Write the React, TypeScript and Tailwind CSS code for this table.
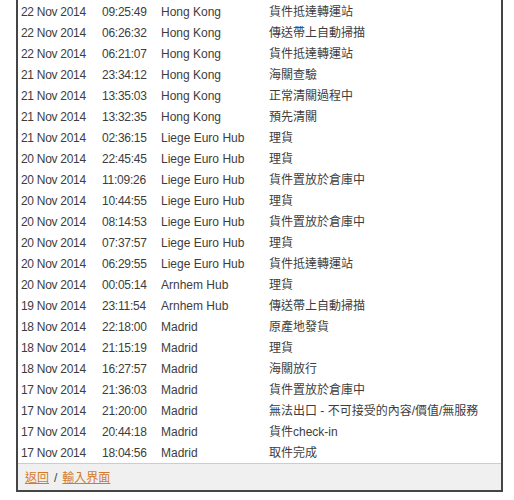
const rows: [string, string, string, string][] = [
  ["22 Nov 2014", "09:25:49", "Hong Kong", "貨件抵達轉運站"],
  ["22 Nov 2014", "06:26:32", "Hong Kong", "傳送帶上自動掃描"],
  ["22 Nov 2014", "06:21:07", "Hong Kong", "貨件抵達轉運站"],
  ["21 Nov 2014", "23:34:12", "Hong Kong", "海關查驗"],
  ["21 Nov 2014", "13:35:03", "Hong Kong", "正常清關過程中"],
  ["21 Nov 2014", "13:32:35", "Hong Kong", "預先清關"],
  ["21 Nov 2014", "02:36:15", "Liege Euro Hub", "理貨"],
  ["20 Nov 2014", "22:45:45", "Liege Euro Hub", "理貨"],
  ["20 Nov 2014", "11:09:26", "Liege Euro Hub", "貨件置放於倉庫中"],
  ["20 Nov 2014", "10:44:55", "Liege Euro Hub", "理貨"],
  ["20 Nov 2014", "08:14:53", "Liege Euro Hub", "貨件置放於倉庫中"],
  ["20 Nov 2014", "07:37:57", "Liege Euro Hub", "理貨"],
  ["20 Nov 2014", "06:29:55", "Liege Euro Hub", "貨件抵達轉運站"],
  ["20 Nov 2014", "00:05:14", "Arnhem Hub", "理貨"],
  ["19 Nov 2014", "23:11:54", "Arnhem Hub", "傳送帶上自動掃描"],
  ["18 Nov 2014", "22:18:00", "Madrid", "原產地發貨"],
  ["18 Nov 2014", "21:15:19", "Madrid", "理貨"],
  ["18 Nov 2014", "16:27:57", "Madrid", "海關放行"],
  ["17 Nov 2014", "21:36:03", "Madrid", "貨件置放於倉庫中"],
  ["17 Nov 2014", "21:20:00", "Madrid", "無法出口 - 不可接受的內容/價值/無服務"],
  ["17 Nov 2014", "20:44:18", "Madrid", "貨件check-in"],
  ["17 Nov 2014", "18:04:56", "Madrid", "取件完成"],
];

export default function App() {
  return (
    <div
      className="w-[514px] h-[500px] bg-white overflow-hidden text-[12px] text-[#3d3d3d]"
      style={{ fontFamily: '"Liberation Sans", Arial, "Noto Sans CJK TC", sans-serif' }}
    >
      <div className="ml-[16px] w-[487px] border-x-2 border-b-2 border-[#454545]">
        <div className="pt-[1px]">
          {rows.map((r, i) => (
            <div key={i} className="grid grid-cols-[81px_59px_108px_1fr] h-[21px] items-center pl-[3px] whitespace-nowrap">
              <span className="tracking-[-0.3px]">{r[0]}</span>
              <span className="tracking-[-0.25px]">{r[1]}</span>
              <span>{r[2]}</span>
              <span>{r[3]}</span>
            </div>
          ))}
        </div>
        <div className="border-t border-[#cdcdcd] bg-[#f0f0f0] h-[27px] flex items-center pl-[7px] pt-[2px] gap-[5px]">
          <a className="text-[#d27a2c] underline">返回</a>
          <span className="text-[#444]">/</span>
          <a className="text-[#d27a2c] underline">輸入界面</a>
        </div>
      </div>
    </div>
  );
}
